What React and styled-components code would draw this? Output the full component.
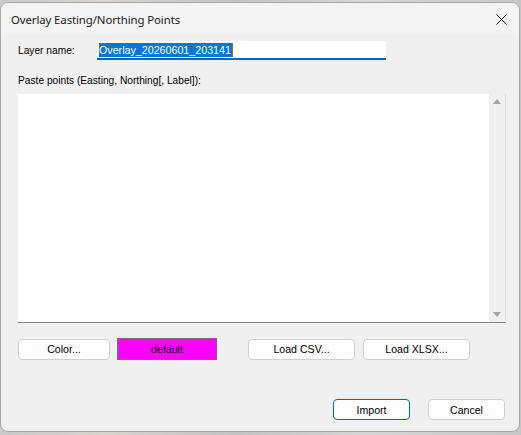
import React from 'react'
import styled, { createGlobalStyle } from 'styled-components'

const GlobalStyle = createGlobalStyle`
  html, body {
    margin: 0;
    padding: 0;
  }
  body {
    width: 521px;
    height: 435px;
    overflow: hidden;
    background: linear-gradient(90deg, #c9c9c9 0%, #d8d4d0 20%, #c2c2c2 45%, #d6d6d6 70%, #c6c6c6 100%);
  }
`;

const Desktop = styled.div`
  padding-top: 2px;
  height: 435px;
  box-sizing: border-box;
`;

const Window = styled.div`
  width: 520px;
  height: 430px;
  box-sizing: border-box;
  background: #f0f0f0;
  border: 1px solid #a8a8a8;
  border-radius: 8px;
  display: flex;
  flex-direction: column;
  font-family: "Liberation Sans", Arial, sans-serif;
  font-size: 10.2px;
  color: #000;
  overflow: hidden;
`;

const TitleBar = styled.div`
  height: 32px;
  display: flex;
  align-items: center;
  justify-content: space-between;
  padding: 0 10px 0 10px;
  background: #f3f3f3;
`;

const Title = styled.div`
  font-family: "Noto Sans", "Open Sans", sans-serif;
  font-size: 11.4px;
  color: #1a1a1a;
  letter-spacing: -0.1px;
`;

const CloseBtn = styled.div`
  width: 14px;
  height: 14px;
  margin-right: 1px;
  display: flex;
  align-items: center;
  justify-content: center;
`;

const Body = styled.div`
  flex: 1;
  display: flex;
  flex-direction: column;
  padding: 6px 14px 0 17px;
`;

const NameRow = styled.div`
  display: flex;
  align-items: center;
  height: 19px;
`;

const Label = styled.div`
  width: 79px;
  white-space: nowrap;
`;

const InputBox = styled.div`
  width: 289px;
  height: 19px;
  box-sizing: border-box;
  background: #fff;
  border-bottom: 2px solid #0067c0;
  display: flex;
  align-items: center;
  padding-left: 2px;
`;

const Selected = styled.span`
  background: #0078d7;
  color: #fff;
  height: 14px;
  line-height: 14px;
  padding: 0 1px 0 0;
  border-right: 1px solid #c05a1a;
  font-size: 10.7px;
`;

const PasteLabel = styled.div`
  margin-top: 12px;
  height: 18px;
  line-height: 18px;
`;

const TextBox = styled.div`
  margin-top: 4px;
  width: 488px;
  height: 229px;
  box-sizing: border-box;
  display: flex;
  background: #fff;
  border-right: 1px solid #dcdcdc;
  border-bottom: 1px solid #838383;
`;

const Area = styled.textarea`
  flex: 1;
  border: none;
  outline: none;
  resize: none;
  background: #fff;
  margin: 0;
  padding: 2px;
  font-family: "Liberation Sans", Arial, sans-serif;
  font-size: 10.2px;
`;

const ScrollBar = styled.div`
  width: 16px;
  background: #f0f0f0;
  display: flex;
  flex-direction: column;
  justify-content: space-between;
  align-items: center;
  padding: 5px 0 5px 0;
`;

const Arrow = styled.div`
  width: 0;
  height: 0;
  border-left: 4px solid transparent;
  border-right: 4px solid transparent;
  ${p => p.$down
    ? 'border-top: 5px solid #a3a3a3;'
    : 'border-bottom: 5px solid #a3a3a3;'}
`;

const ButtonRow = styled.div`
  margin-top: 15px;
  display: flex;
  align-items: center;
  height: 22px;
`;

const Button = styled.div`
  width: ${p => p.$w || 92}px;
  height: 21px;
  box-sizing: border-box;
  background: #fdfdfd;
  border: 1px solid ${p => (p.$primary ? '#0067c0' : '#d0d0d0')};
  border-radius: 4px;
  display: flex;
  align-items: center;
  justify-content: center;
  margin-left: ${p => p.$ml || 0}px;
  color: #000;
  font-size: 10.6px;
`;

const Swatch = styled.div`
  width: 100px;
  height: 22px;
  box-sizing: border-box;
  background: #ff00ff;
  border: 1px solid #6e6e6e;
  margin-left: 7px;
  display: flex;
  align-items: center;
  justify-content: center;
  font-size: 10.6px;
`;

const Footer = styled.div`
  margin-top: 39px;
  display: flex;
  justify-content: flex-end;
`;

export default function App() {
  return (
    <>
      <GlobalStyle />
      <Desktop>
        <Window>
          <TitleBar>
            <Title>Overlay Easting/Northing Points</Title>
            <CloseBtn>
              <svg width="11" height="11" viewBox="0 0 11 11">
                <path d="M0.5 0.5 L10.5 10.5 M10.5 0.5 L0.5 10.5" stroke="#1a1a1a" strokeWidth="1" />
              </svg>
            </CloseBtn>
          </TitleBar>
          <Body>
            <NameRow>
              <Label>Layer name:</Label>
              <InputBox>
                <Selected>Overlay_20260601_203141</Selected>
              </InputBox>
            </NameRow>
            <PasteLabel>Paste points (Easting, Northing[, Label]):</PasteLabel>
            <TextBox>
              <Area defaultValue="" />
              <ScrollBar>
                <Arrow />
                <Arrow $down />
              </ScrollBar>
            </TextBox>
            <ButtonRow>
              <Button $w={92}>Color...</Button>
              <Swatch>default</Swatch>
              <Button $w={107} $ml={31}>Load CSV...</Button>
              <Button $w={107} $ml={8}>Load XLSX...</Button>
            </ButtonRow>
            <Footer>
              <Button $w={77} $primary>Import</Button>
              <Button $w={77} $ml={18}>Cancel</Button>
            </Footer>
          </Body>
        </Window>
      </Desktop>
    </>
  );
}
